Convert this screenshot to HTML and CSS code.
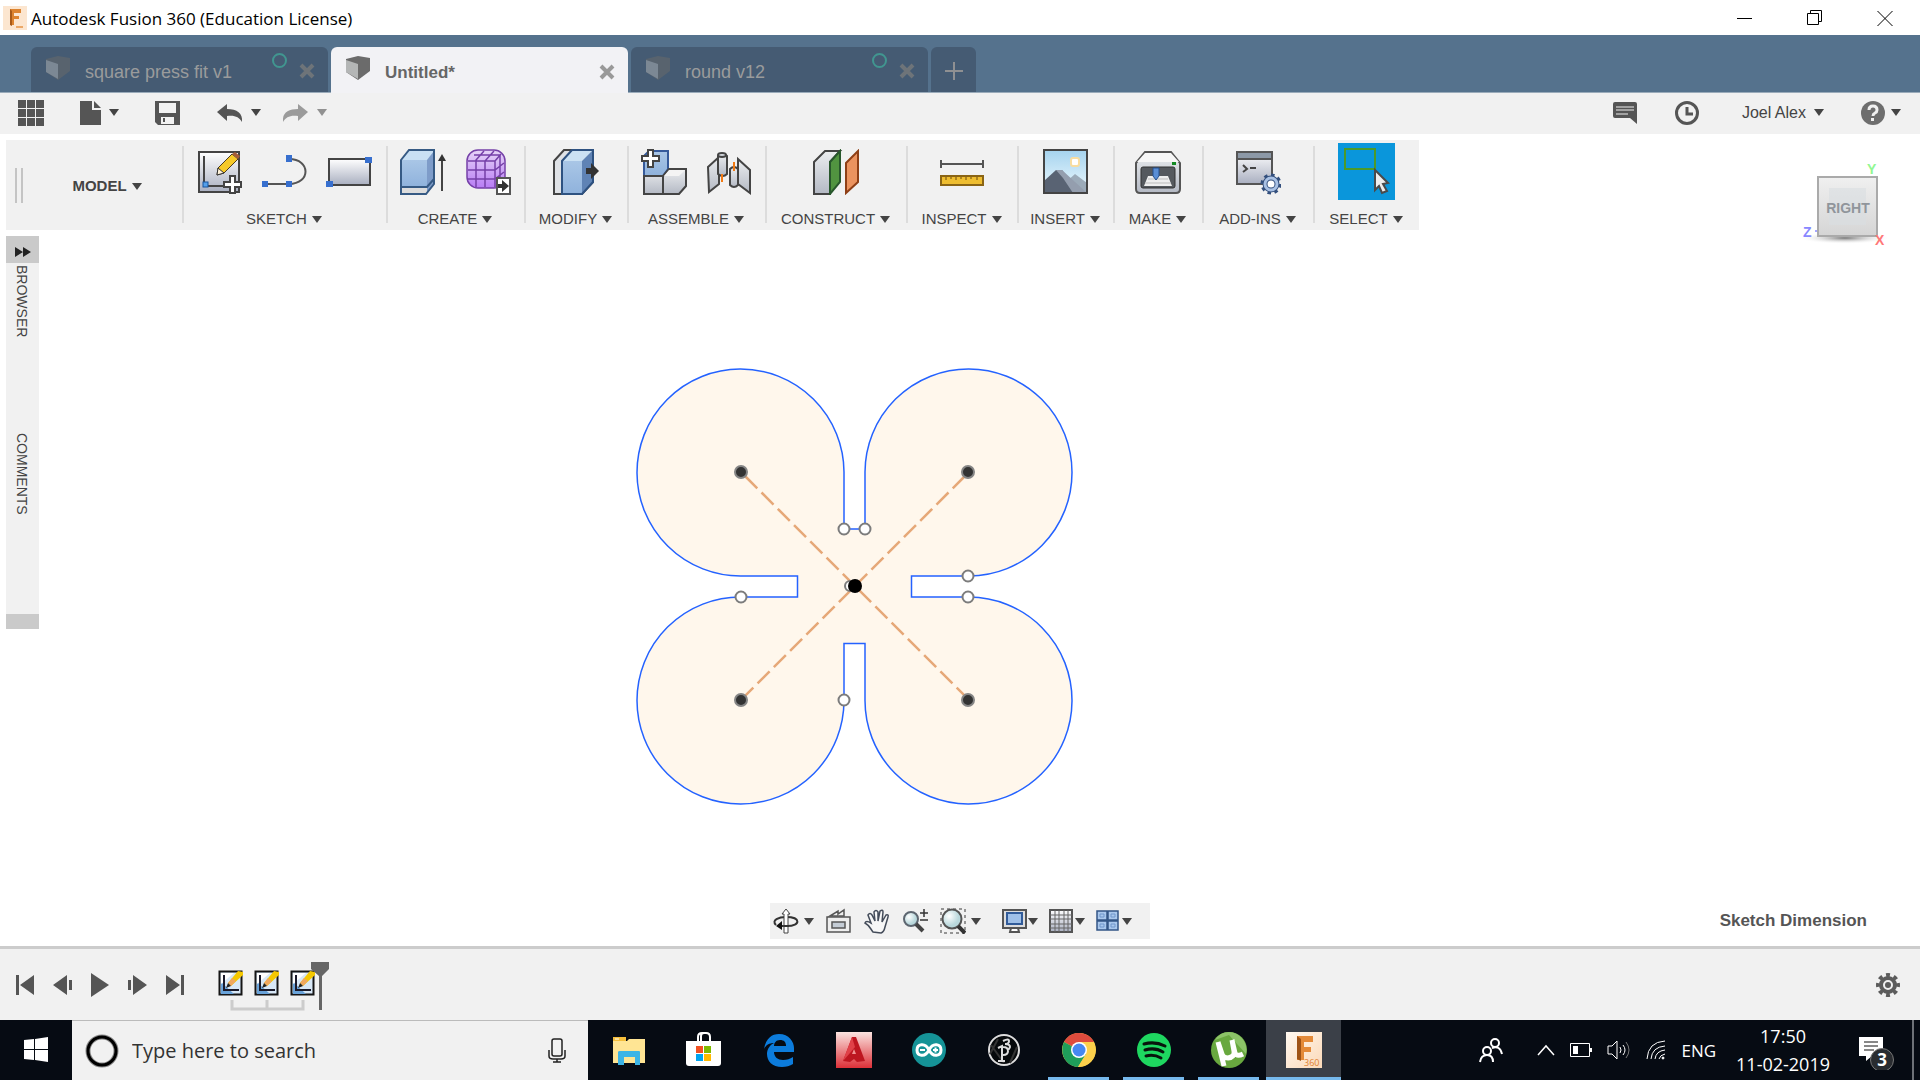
FILE: index.html
```html
<!DOCTYPE html>
<html lang="en">
<head>
<meta charset="utf-8">
<title>Autodesk Fusion 360 (Education License)</title>
<link rel="stylesheet" href="styles.css">
</head>
<body>
<svg class="defs" aria-hidden="true">
  <defs>
    <linearGradient id="steel" x1="0" y1="0" x2="0" y2="1"><stop offset="0" stop-color="#fff"/><stop offset="1" stop-color="#a9afc0"/></linearGradient>
    <linearGradient id="metal" x1="0" y1="0" x2="0" y2="1"><stop offset="0" stop-color="#eceef0"/><stop offset="1" stop-color="#b4b9c4"/></linearGradient>
    <linearGradient id="blue" x1="0" y1="0" x2="0" y2="1"><stop offset="0" stop-color="#a9c6e6"/><stop offset="1" stop-color="#8fb2dc"/></linearGradient>
    <linearGradient id="sky" x1="0" y1="0" x2="0" y2="1"><stop offset="0" stop-color="#a5d3ee"/><stop offset="1" stop-color="#eefaff"/></linearGradient>
    <linearGradient id="violet" x1="0" y1="0" x2="0" y2="1"><stop offset="0" stop-color="#e6d4f7"/><stop offset="1" stop-color="#b87cf5"/></linearGradient>
    <linearGradient id="red" x1="0" y1="0" x2="0" y2="1"><stop offset="0" stop-color="#fbe4e0"/><stop offset="1" stop-color="#dc3038"/></linearGradient>
    <linearGradient id="peach" x1="0" y1="0" x2="1" y2="1"><stop offset="0" stop-color="#fff8f0"/><stop offset="1" stop-color="#fbd9b8"/></linearGradient>
    <linearGradient id="face" x1="0" y1="0" x2="0" y2="1"><stop offset="0" stop-color="#f0f0f0"/><stop offset="1" stop-color="#d5d5d5"/></linearGradient>
    <radialGradient id="shade"><stop offset="0" stop-color="#777"/><stop offset="1" stop-color="#fff" stop-opacity="0"/></radialGradient>
    <radialGradient id="glass" cx=".35" cy=".35"><stop offset="0" stop-color="#fff"/><stop offset="1" stop-color="#b9d8dc"/></radialGradient>
    <symbol id="cube" viewBox="0 0 24 24"><path d="M0 3 12 0 24 2V15L12 24 0 16Z" fill="#6b6b6b"/><path d="M0 4 12 8V23L0 16Z" fill="#b4b6b6"/></symbol>
    <symbol id="feature" viewBox="0 0 26 26">
      <rect x="1.500" y="1.500" width="22" height="23" fill="#d8e8f7" stroke="#151515" stroke-width="2"/>
      <path d="M3 12 16 24H3Z" fill="#69a3da"/><path d="M3 3h13L3 14Z" fill="#fff"/>
      <path d="M6 5V20H21" fill="none" stroke="#1a1a2a" stroke-width="2"/>
      <path d="m10 13 10-12 5 1v3L13 16Z" fill="#f5c800"/><path d="m10 13 4-5 4 3-5 5Z" fill="#f0a860"/><path d="m8 18 2-5 3 3Z" fill="#222"/>
    </symbol>
  </defs>
</svg>

<header class="titlebar">
  <svg class="app-icon" width="24" height="24" viewBox="0 0 24 24"><rect width="24" height="24" fill="#fce6d0"/><path d="M7 3h11v4h-7v3h5v3h-5v6H7Z" fill="#dd8430"/><path d="M7 3v16l2 1V5Z" fill="#a85a18"/><path d="M13 21h7" stroke="#eba868" stroke-width="2"/></svg>
  <h1 class="title">Autodesk Fusion 360 (Education License)</h1>
  <div class="window-buttons">
    <button aria-label="Minimize"><svg width="16" height="16"><path d="M0 8.500H15" stroke="#000"/></svg></button>
    <button aria-label="Restore"><svg width="16" height="16" fill="none" stroke="#000"><path d="M.5 3.500h11v11H.5ZM3.500 3V.500h11v11H12"/></svg></button>
    <button aria-label="Close"><svg width="16" height="16"><path d="m.5 1 15 15M15.500 1l-15 15" stroke="#000"/></svg></button>
  </div>
</header>

<nav class="tabs" aria-label="Documents">
  <div class="tab"><svg class="tab-cube" width="24" height="24"><use href="#cube"/></svg><span class="tab-name">square press fit v1</span><i class="ring"></i><button class="tab-close" aria-label="Close tab"><svg width="16" height="16"><path d="m2 2 12 12M14 2 2 14" stroke="currentColor" stroke-width="4"/></svg></button></div>
  <div class="tab tab-active"><svg class="tab-cube" width="24" height="24"><use href="#cube"/></svg><span class="tab-name">Untitled*</span><button class="tab-close" aria-label="Close tab"><svg width="16" height="16"><path d="m2 2 12 12M14 2 2 14" stroke="currentColor" stroke-width="4"/></svg></button></div>
  <div class="tab"><svg class="tab-cube" width="24" height="24"><use href="#cube"/></svg><span class="tab-name">round v12</span><i class="ring"></i><button class="tab-close" aria-label="Close tab"><svg width="16" height="16"><path d="m2 2 12 12M14 2 2 14" stroke="currentColor" stroke-width="4"/></svg></button></div>
  <button class="tab-add" aria-label="New tab"><svg width="18" height="18"><path d="M9 0V18M0 9H18" stroke="#8f9092" stroke-width="2"/></svg></button>
</nav>

<div class="quickbar">
  <div class="quick-left">
    <button aria-label="Data panel"><svg width="26" height="26" fill="#555"><path d="M0 0h8v8H0ZM9 0h8v8H9ZM18 0h8v8h-8ZM0 9h8v8H0ZM9 9h8v8H9ZM18 9h8v8h-8ZM0 18h8v8H0ZM9 18h8v8H9ZM18 18h8v8h-8Z"/></svg></button>
    <button class="with-caret" aria-label="File"><svg width="21" height="26" fill="#555"><path d="M0 1h12v9h9v15H0Z"/><path d="M14 1l7 7h-7Z"/></svg><i class="caret"></i></button>
    <button aria-label="Save"><svg width="26" height="26"><path d="M0 1h25v24H3l-3-3Z" fill="#555"/><path d="M4 3h17v10H4ZM6 17h13v7H6Z" fill="#f2f2f2"/><path d="M8 18h2v4H8Z" fill="#555"/></svg></button>
    <div class="history">
      <button class="with-caret" aria-label="Undo"><svg width="26" height="18"><path d="M0 8 10 0v5C20 5 26 9 25 18 22 13 18 11 10 12v5Z" fill="#555"/></svg><i class="caret"></i></button>
      <button class="with-caret faded" aria-label="Redo"><svg width="26" height="18"><path d="M25 8 15 0v5C5 5-1 9 0 18 3 13 7 11 15 12v5Z" fill="#555"/></svg><i class="caret"></i></button>
    </div>
  </div>
  <div class="quick-right">
    <button aria-label="Comments"><svg width="26" height="26"><path d="M3 2h20q2 0 2 2v20l-7-6H3q-2 0-2-2V4q0-2 2-2Z" fill="#555"/><path d="M4 7h18M4 10h18M4 14h12" stroke="#f0f0f0" stroke-width="1"/></svg></button>
    <button aria-label="Job status"><svg width="26" height="26" fill="none" stroke="#555" stroke-width="3"><circle cx="13" cy="13" r="10.500"/><path d="M13 7v7h6"/></svg></button>
    <button class="with-caret user">Joel Alex<i class="caret"></i></button>
    <button class="with-caret help" aria-label="Help"><svg width="26" height="26"><circle cx="13" cy="13" r="12" fill="#6e6e6e"/><path d="M9 10q0-4 4-4t4 4q0 2-2 3-2 1-2 3" fill="none" stroke="#f0f0f0" stroke-width="3"/><rect x="11" y="18" width="3" height="3" fill="#f0f0f0"/></svg><i class="caret"></i></button>
  </div>
</div>

<main class="canvas">
  <div class="ribbon">
    <div class="workspace"><i class="grip"></i><button class="label model">MODEL<i class="caret"></i></button></div>

    <section class="group"><div class="tools">
      <button aria-label="Create sketch"><svg width="46" height="46"><rect x="3" y="3" width="40" height="40" fill="url(#steel)" stroke="#444" stroke-width="2"/><path d="M8 7V37H29" fill="none" stroke="#444" stroke-width="2"/><rect x="7" y="33" width="5" height="5" fill="#54a0ea" stroke="#1755a0"/><path d="m22 19 14-14 6 5L28 24l-7 2Z" fill="#f6c928" stroke="#4a3a20"/><path d="m36 5 3-2 5 4-2 3Z" fill="#a55c38"/><path d="m21 26 1-7 6 5Z" fill="#fff2d8" stroke="#333"/><path d="M34 27h5v6h6v5h-6v6h-5v-6h-6v-5h6Z" fill="#fff" stroke="#444" stroke-width="2"/></svg></button>
      <button aria-label="Line"><svg width="46" height="46"><path d="M4 35H28C50 35 50 10 28 10" fill="none" stroke="#555" stroke-width="2"/><path d="M1 32h6v6H1ZM25 32h6v6h-6ZM25 6h6v7h-6Z" fill="#376fce"/></svg></button>
      <button aria-label="Rectangle"><svg width="46" height="46"><rect x="3" y="10" width="41" height="26" fill="url(#steel)" stroke="#444" stroke-width="2"/><path d="M0 32h7v6H0ZM39 8h7v6h-7Z" fill="#376fce"/></svg></button>
    </div><button class="label">SKETCH<i class="caret"></i></button></section>

    <section class="group"><div class="tools">
      <button aria-label="Extrude"><svg width="46" height="46"><path d="m1 11 8-10h25v34l-8 10H1Z" fill="#c9e0f4"/><path d="m27 11 7-9v34l-7 8Z" fill="#7e9cc9"/><rect x="1" y="11" width="26" height="27" fill="url(#blue)"/><path d="M1 38h26v7H1Z" fill="#ddd"/><path d="m1 11 8-10h25v34l-8 10H1ZM1 38h26l7-8" fill="none" stroke="#365a84" stroke-width="2"/><path d="M42 42V10" stroke="#444" stroke-width="2"/><path d="m38 12 4-7 4 7Z" fill="#333"/></svg></button>
      <button aria-label="Create form"><svg width="46" height="46"><rect x="2" y="1" width="38" height="38" rx="11" fill="url(#violet)"/><g fill="none" stroke="#7540a8" stroke-width="1.500"><rect x="2" y="1" width="38" height="38" rx="11"/><path d="M3 12h27v26M3 21h27l9-7M3 30h27l9-7M11 38V11l8-9M20 38V12l9-10M30 12l6-7M9 6h27M35 33V7"/></g><path d="M32 29h13v16H32Z" fill="#fff" stroke="#555" stroke-width="2"/><path d="M33 35h4v-4l7 6-7 6v-4h-4Z" fill="#333"/></svg></button>
    </div><button class="label">CREATE<i class="caret"></i></button></section>

    <section class="group"><div class="tools">
      <button aria-label="Press pull"><svg width="46" height="46"><path d="M1 12 11 1H40V33L29 45H1Z" fill="#dfe2e6" stroke="#444" stroke-width="2"/><path d="M9 12 19 1H40L29 12Z" fill="#cbe1f3"/><path d="M29 12 40 1V33L29 45Z" fill="#5f83b5"/><rect x="9" y="12" width="20" height="33" fill="url(#blue)"/><path d="M9 45V12L19 1H40V33L29 45Z" fill="none" stroke="#2e5281" stroke-width="2"/><path d="M33 19h5v-5l8 8-8 8v-5h-5Z" fill="#333"/></svg></button>
    </div><button class="label">MODIFY<i class="caret"></i></button></section>

    <section class="group"><div class="tools">
      <button aria-label="New component"><svg width="46" height="46"><path d="M3 7 8 2H27V20L22 27H3Z" fill="url(#blue)" stroke="#365a9a" stroke-width="2"/><path d="M3 27H22V45H3ZM22 27l6-7H45V37l-7 8H22Z" fill="url(#metal)" stroke="#444" stroke-width="2"/><path d="M23 27H38L44 21H28Z" fill="#f4f4f4"/><path d="M7 1h5v6h6v5h-6v6H7v-6H1V7h6Z" fill="#fff" stroke="#444" stroke-width="2"/></svg></button>
      <button aria-label="Joint"><svg width="46" height="46" fill="url(#metal)" stroke="#444" stroke-width="2"><path d="m2 18 11-10v27L3 43Z"/><path d="M12 7q5-4 9 0v18q-4 4-9 0Z"/><ellipse cx="16" cy="6" rx="4" ry="2"/><path d="m32 10 12 11v23L32 35Z"/><path d="M24 20q4-4 8 0v16q-4 4-8 0Z"/><path d="M16 25v8M28 13v9" stroke="#f37a13"/></svg></button>
    </div><button class="label">ASSEMBLE<i class="caret"></i></button></section>

    <section class="group"><div class="tools">
      <button aria-label="Offset plane"><svg width="46" height="46" stroke-width="2"><path d="M1 13 12 2H27L17 13V45H1Z" fill="url(#metal)" stroke="#444"/><path d="M17 13 27 2V33L17 45Z" fill="#519440" stroke="#28572c"/><path d="M33 14 45 2V33L33 44Z" fill="#eb935f" stroke="#8e3f16"/></svg></button>
    </div><button class="label">CONSTRUCT<i class="caret"></i></button></section>

    <section class="group"><div class="tools">
      <button aria-label="Measure"><svg width="46" height="46"><path d="M2 15H44M2 11v8M44 11v8" stroke="#555" stroke-width="2"/><rect x="2" y="27" width="42" height="9" fill="#eebd30" stroke="#8a6414" stroke-width="2"/><path d="M7 28v3M12 28v2M17 28v3M22 28v2M27 28v3M32 28v2M38 28v3" stroke="#6c4b08"/></svg></button>
    </div><button class="label">INSPECT<i class="caret"></i></button></section>

    <section class="group"><div class="tools">
      <button aria-label="Insert image"><svg width="46" height="46"><rect x="2" y="1" width="43" height="43" fill="url(#sky)"/><path d="M16 40 33 25 45 34V44H16Z" fill="#9cabb9"/><path d="M2 32 14 21h6l18 23H2Z" fill="#596373"/><path d="M14 21h6l25 23H31L21 29Z" fill="#949eae"/><rect x="29" y="9" width="8" height="8" rx="2" fill="#fff" stroke="#f8dda0" stroke-width="2"/><rect x="2" y="1" width="43" height="43" fill="none" stroke="#444" stroke-width="2"/></svg></button>
    </div><button class="label">INSERT<i class="caret"></i></button></section>

    <section class="group"><div class="tools">
      <button aria-label="3D print"><svg width="46" height="46"><path d="M1 14 10 3H36l9 11V40q0 4-4 4H5q-4 0-4-4Z" fill="url(#metal)" stroke="#555" stroke-width="2"/><path d="M2 13 10 4H36l8 9Z" fill="#f7f7f7"/><rect x="6" y="18" width="34" height="21" rx="2" fill="#55595e" stroke="#333"/><path d="m13 27-4 10h28l-4-10Z" fill="#eee"/><path d="M10 34h26M13 30h20" stroke="#bbb"/><path d="M18 19h6v8l-3 4-3-4Z" fill="#5a8ed5" stroke="#24508f"/><rect x="37" y="13" width="4" height="3" fill="#138a22"/></svg></button>
    </div><button class="label">MAKE<i class="caret"></i></button></section>

    <section class="group"><div class="tools">
      <button aria-label="Scripts and add-ins"><svg width="46" height="46"><rect x="2" y="3" width="35" height="32" fill="url(#steel)" stroke="#555" stroke-width="2"/><path d="M3 4h33v6H3Z" fill="#8c98a6"/><path d="M2 10H37" stroke="#555" stroke-width="2"/><path d="m8 16 4 4-4 3M15 19h6" fill="none" stroke="#444" stroke-width="2"/><circle cx="36" cy="35" r="9" fill="none" stroke="#34507e" stroke-width="3" stroke-dasharray="1 1" pathLength="16"/><circle cx="36" cy="35" r="6" fill="#fff" stroke="#34507e" stroke-width="5"/><circle cx="36" cy="35" r="6" fill="none" stroke="#a9c1e4" stroke-width="3"/></svg></button>
    </div><button class="label">ADD-INS<i class="caret"></i></button></section>

    <section class="group"><div class="tools">
      <button class="selected" aria-label="Select"><svg width="57" height="57"><rect x="7" y="6" width="30" height="20" fill="none" stroke="#4c9a2a" stroke-width="2"/><path d="M37 27 50 40l-5 1 4 7-5 2-3-7-4 4Z" fill="#eee" stroke="#4a4a4a" stroke-width="2"/></svg></button>
    </div><button class="label">SELECT<i class="caret"></i></button></section>
  </div>

  <aside class="sidebar">
    <button class="expand" aria-label="Expand"><svg width="16" height="10" fill="#222"><path d="m0 0 8 5-8 5ZM8 0l8 5-8 5Z"/></svg></button>
    <button class="side-tab">BROWSER</button>
    <button class="side-tab">COMMENTS</button>
    <i class="side-foot"></i>
  </aside>

  <svg class="viewcube" width="105" height="100" viewBox="1795 155 105 100">
    <ellipse cx="1845" cy="238" rx="46" ry="6" fill="url(#shade)"/>
    <rect x="1818" y="177" width="59" height="59" fill="url(#face)" stroke="#aaa" stroke-width="2"/>
    <rect x="1829" y="188" width="37" height="37" fill="#d8dde1" opacity=".6"/>
    <text class="cube-face" x="1848" y="213" text-anchor="middle">RIGHT</text>
    <text class="axis" x="1867" y="174" fill="#92f792">Y</text><text class="axis" x="1803" y="237" fill="#8888ff">Z</text><text class="axis" x="1875" y="245" fill="#ff7777">X</text>
    <circle cx="1816" cy="231" r="1" fill="#88f"/>
  </svg>

  <svg class="sketch" width="450" height="452" viewBox="630 360 450 452">
    <path d="M844 529V472A103.500 103.500 0 1 0 741 576H797.500V597H741A103.500 103.500 0 1 0 844 700V643.500H865V700A103.500 103.500 0 1 0 969 597H911.500V576H969A103.500 103.500 0 1 0 865 472V529Z" fill="#fff7ec" stroke="#2462ff" stroke-width="1.500"/>
    <path d="M741 472 969 700M969 472 741 700" stroke="#e6a878" stroke-width="2.500" stroke-dasharray="17 6" stroke-dashoffset="-6"/>
    <g fill="#fff" stroke="#7c7c7c" stroke-width="2"><circle cx="844" cy="529" r="5.500"/><circle cx="865" cy="529" r="5.500"/><circle cx="741" cy="597" r="5.500"/><circle cx="968" cy="576" r="5.500"/><circle cx="968" cy="597" r="5.500"/><circle cx="844" cy="700" r="5.500"/><circle cx="850" cy="586" r="5"/></g>
    <g fill="#333" stroke="#858585" stroke-width="2"><circle cx="741" cy="472" r="6"/><circle cx="968" cy="472" r="6"/><circle cx="741" cy="700" r="6"/><circle cx="968" cy="700" r="6"/></g>
    <circle cx="855" cy="586" r="7" fill="#000"/>
  </svg>

  <div class="navbar">
    <div class="nav-group">
      <button class="with-caret" aria-label="Orbit"><svg width="26" height="26"><path d="M3 17C-2 12 6 9 13 9c15 0 15 9 1 9H7" fill="none" stroke="#333" stroke-width="2"/><path d="m13 1 4 5h-2v19h-4V6H9Z" fill="#fff" stroke="#444"/><path d="M11 18h5" stroke="#333" stroke-width="2"/><path d="m3 18 6-5v9Z" fill="#111"/></svg><i class="caret"></i></button>
      <button aria-label="Look at"><svg width="26" height="26" fill="#eee" stroke="#555" stroke-width="1.500"><path d="m4 8 8-5v3l6-4v6Z"/><path d="M1 9h23v15H1Z"/><path d="M6 14h13v6H6Z" fill="#c4ccd5"/></svg></button>
      <button aria-label="Pan"><svg width="26" height="26"><path d="M9 24C6 20 5 17 1 15q1-3 6 0L4 7q2-3 4 0l3 6-1-9q2-3 4 0v9l2-10q3-2 3 1l-1 10 4-7q3-1 2 2l-3 10q-1 5-4 6Z" fill="#f7f7f7" stroke="#444c5a" stroke-width="1.500"/></svg></button>
      <button aria-label="Zoom"><svg width="26" height="26"><circle cx="9" cy="11" r="7" fill="url(#glass)" stroke="#5d6670" stroke-width="2"/><path d="m14 16 7 7" stroke="#444" stroke-width="4"/><path d="M22 1v8M18 5h8M18 12h8" stroke="#333" stroke-width="1.500"/></svg></button>
      <button class="with-caret" aria-label="Fit"><svg width="26" height="26"><path d="M1 1h24v24H1Z" fill="none" stroke="#777" stroke-width="1.500" stroke-dasharray="3 3"/><circle cx="12" cy="11" r="9.500" fill="url(#glass)" stroke="#555" stroke-width="2"/><path d="m18 18 7 7" stroke="#333" stroke-width="4"/></svg><i class="caret"></i></button>
    </div>
    <div class="nav-group nav-display">
      <button class="with-caret" aria-label="Display settings"><svg width="26" height="26"><path d="M2 2h23v18H2Z" fill="#ddd" stroke="#555" stroke-width="2"/><path d="M6 5h15v11H6Z" fill="#9fc0e8" stroke="#315b99" stroke-width="2"/><path d="M10 20h7l1 4H9Z" fill="#fff" stroke="#555" stroke-width="2"/></svg><i class="caret"></i></button>
      <button class="with-caret" aria-label="Grid and snaps"><svg width="26" height="26"><path d="M2 2h22v22H2Z" fill="url(#steel)" stroke="#555" stroke-width="2"/><path d="M7 2v22M11 2v22M16 2v22M20 2v22M2 7h22M2 11h22M2 16h22M2 20h22" stroke="#666"/></svg><i class="caret"></i></button>
      <button class="with-caret" aria-label="Viewports"><svg width="26" height="26" fill="#a9c7ec" stroke="#335686" stroke-width="1.500"><path d="M2 3h10v9H2ZM13 3h10v9H13ZM2 13h10v9H2ZM13 13h10v9H13Z"/><path d="M5 6h4v3H5ZM16 6h4v3h-4ZM5 16h4v3H5ZM16 16h4v3h-4Z" stroke="#7197cc" stroke-width="1"/></svg><i class="caret"></i></button>
    </div>
  </div>
  <p class="hint">Sketch Dimension</p>
</main>

<footer class="timeline">
  <div class="playback">
    <button aria-label="Go to start"><svg width="20" height="24" fill="#555"><path d="M0 2h3v20H0ZM18 2v20L4 12Z"/></svg></button>
    <button aria-label="Step back"><svg width="20" height="24" fill="#555"><path d="M14 2v20L0 12ZM16 7h3v10h-3Z"/></svg></button>
    <button aria-label="Play"><svg width="20" height="24" fill="#555"><path d="m1 0 18 12L1 24Z"/></svg></button>
    <button aria-label="Step forward"><svg width="20" height="24" fill="#555"><path d="m6 2 14 10L6 22ZM1 7h3v10H1Z"/></svg></button>
    <button aria-label="Go to end"><svg width="20" height="24" fill="#555"><path d="m2 2 14 10L2 22ZM17 2h3v20h-3Z"/></svg></button>
  </div>
  <div class="features">
    <button aria-label="Sketch 1"><svg width="26" height="26"><use href="#feature"/></svg></button>
    <button aria-label="Sketch 2"><svg width="26" height="26"><use href="#feature"/></svg></button>
    <button aria-label="Sketch 3"><svg width="26" height="26"><use href="#feature"/></svg></button>
    <svg class="marker" width="114" height="50"><path d="M14 38v9H85V38M49 38v9" fill="none" stroke="#ccc" stroke-width="3"/><path d="M93 0h18v7l-7 7v34h-3V14l-8-7Z" fill="#666"/></svg>
  </div>
  <button class="settings" aria-label="Timeline settings"><svg width="24" height="24" fill="none" stroke="#5c5c5c"><circle cx="12" cy="12" r="7" stroke-width="4"/><circle cx="12" cy="12" r="10" stroke-width="4" stroke-dasharray="1 1" stroke-dashoffset=".5" pathLength="16"/><circle cx="12" cy="12" r="3" fill="#5c5c5c" stroke="none"/></svg></button>
</footer>

<div class="taskbar">
  <button class="start" aria-label="Start"><svg width="24" height="26" fill="#fff"><path d="m0 3 10-1v10H0ZM11 2l13-2v12H11ZM0 13h10v10L0 22ZM11 13h13v12l-13-2Z"/></svg></button>
  <label class="search">
    <svg width="34" height="34"><circle cx="17" cy="17" r="14" fill="none" stroke="#888" stroke-width="5"/><circle cx="17" cy="17" r="14" fill="none" stroke="#000" stroke-width="3"/></svg>
    <input type="text" placeholder="Type here to search" aria-label="Search">
    <svg width="18" height="26" fill="none" stroke="#222" stroke-width="1.500"><rect x="4" y="1" width="10" height="17" rx="2"/><path d="M1 12v6q0 3 4 3h8q4 0 4-3v-6M9 21v3M5 24h8"/></svg>
  </label>
  <nav class="apps" aria-label="Apps">
    <button class="app" aria-label="File Explorer"><svg width="36" height="36"><path d="M2 5h13v6H2Z" fill="#f5bf3c"/><path d="M2 9 16 9l2-2h16v24H2Z" fill="#ffe594"/><path d="M7 20q0-1 2-1h19q1 0 1 1v13h-5v-8H13v8H7Z" fill="#3db5e6"/><path d="M4 7h4" stroke="#fff"/></svg></button>
    <button class="app" aria-label="Store"><svg width="36" height="36"><path d="M12 10V5q0-4 4-4h4q4 0 4 4v5M15 10V4q0-3 3-3" fill="none" stroke="#fff" stroke-width="2"/><path d="M0 9h35v22q0 3-3 3H3q-3 0-3-3Z" fill="#fff"/><path d="M10 14h7v7h-7Z" fill="#f25022"/><path d="M18 14h7v7h-7Z" fill="#7fba00"/><path d="M10 22h7v7h-7Z" fill="#00a4ef"/><path d="M18 22h7v7h-7Z" fill="#ffb900"/></svg></button>
    <button class="app" aria-label="Edge"><svg width="36" height="36"><path d="M3 17C5 6 11 2 18 2c10 0 15 8 15 14v4H13c0 5 4 8 9 8 4 0 7-1 10-3v7c-3 2-7 3-11 3C11 35 6 29 6 22c0-5 3-9 7-11-5 0-8 2-10 6Zm10-3h12c0-4-2-6-6-6s-6 3-6 6Z" fill="#0c7cdc"/></svg></button>
    <button class="app" aria-label="AutoCAD"><svg width="36" height="36"><rect width="36" height="36" fill="url(#red)"/><path d="M16 5h4l9 24-8 1-3-3-4 3-7-1Z" fill="#bd1620"/><path d="m16 5-9 24 7-8 5-6Z" fill="#e04148"/><path d="m18 17 2 5h-4Z" fill="#f09090"/></svg></button>
    <button class="app" aria-label="Arduino"><svg width="36" height="36"><circle cx="18" cy="18" r="17" fill="#159397"/><path d="M18 18c-4-8-12-6-12 0s8 8 12 0 12-6 12 0-8 8-12 0Z" fill="none" stroke="#fff" stroke-width="3"/><path d="M9 18h5M22 18h5M24.500 15.500v5" stroke="#fff" stroke-width="2"/></svg></button>
    <button class="app" aria-label="Processing"><svg width="36" height="36" fill="none" stroke="#ddd" stroke-width="2"><circle cx="18" cy="18" r="15" fill="#06090b"/><path d="m5 13 13 18M12 7l-8 15M24 31 31 15" stroke="#333"/><path d="M12 29h7M16 29V14l-4 2M17 15q5 0 5 4t-5 4M17 9q6-3 6 0t-4 3q5 0 5 3-1 3-3 3" stroke-width="2"/></svg></button>
    <button class="app app-open" aria-label="Chrome"><svg width="36" height="36"><circle cx="18" cy="18" r="17" fill="#fcd04b"/><path d="M18 18 3 10C7 3 12 1 18 1s12 3 15 9H18Z" fill="#dd4b3d"/><path d="M3 10q-3 6-1 13c2 7 8 12 15 12l8-13-7-4Z" fill="#1f9e5a"/><path d="M18 10H33q5 14-6 22-5 3-10 3l8-13Z" fill="#fcd04b"/><circle cx="18" cy="18" r="8" fill="#fff"/><circle cx="18" cy="18" r="6.500" fill="#4688f1"/></svg></button>
    <button class="app app-open" aria-label="Spotify"><svg width="36" height="36"><circle cx="18" cy="18" r="17" fill="#1ed760"/><path d="M8 12q11-3 21 2M9 18q10-3 18 2M10 24q8-2 15 2" fill="none" stroke="#08150c" stroke-width="3" stroke-linecap="round"/></svg></button>
    <button class="app app-open" aria-label="uTorrent"><svg width="36" height="36"><circle cx="18" cy="18" r="18" fill="#68a83f"/><path d="M18 0a18 18 0 0 1 17 22L18 3 4 8Q9 0 18 0Z" fill="#8cc368"/><path d="m7 10 6 24M7 10l4 12q1 4 6 4 7-1 6-7L21 8l3 13q2 4 8 1" fill="none" stroke="#fff" stroke-width="5"/></svg></button>
    <button class="app app-open app-current" aria-label="Fusion 360"><svg width="36" height="36"><rect width="36" height="36" fill="url(#peach)"/><path d="M11 4h16v6H18v5h7v5h-7v8h-7Z" fill="#e48a38"/><path d="m11 4 4 3v22l-4-2Z" fill="#9f5316"/><text class="badge-360" x="18" y="34">360</text></svg></button>
  </nav>
  <div class="tray">
    <button class="people" aria-label="People"><svg width="24" height="26" fill="none" stroke="#fff" stroke-width="2"><circle cx="16" cy="6" r="4"/><circle cx="8" cy="14" r="4"/><path d="M1 25q1-7 7-7t6 7M13 11q8-3 10 6"/></svg></button>
    <button aria-label="Hidden icons"><svg width="18" height="12"><path d="m1 11 8-9 8 9" fill="none" stroke="#fff" stroke-width="1.500"/></svg></button>
    <button aria-label="Battery"><svg width="22" height="14"><path d="M.5.500h19v13H.5Z" fill="none" stroke="#fff"/><path d="M3 3h5v8H3ZM20 5h2v4h-2Z" fill="#fff"/></svg></button>
    <button aria-label="Volume"><svg width="24" height="20" fill="none" stroke="#fff"><path d="M1 6h4l5-5v18l-5-5H1Z"/><path d="M13 7q2 3 0 6M16 5q4 5 0 10"/><path d="M19 2q6 8 0 16" stroke="#777"/></svg></button>
    <button aria-label="Network"><svg width="20" height="20" fill="none" stroke="#fff"><path d="M1 19Q2 2 19 1M5 19Q6 7 19 6M9 19q1-8 10-9M13 19q1-4 6-5"/><circle cx="17" cy="18" r="1" fill="#fff"/></svg></button>
    <button>ENG</button>
    <button class="clock"><span>17:50</span><span>11-02-2019</span></button>
    <button aria-label="Notifications"><svg width="38" height="40"><path d="M0 7h24v19H13l-6 5v-5H0Z" fill="#fff"/><path d="M5 12h14M5 16h14M5 20h10" stroke="#111" stroke-width="1"/><circle cx="23" cy="30" r="11.500" fill="#292c30" stroke="#777"/><text class="count" x="23" y="36" text-anchor="middle">3</text></svg></button>
    <i class="peek"></i>
  </div>
</div>
</body>
</html>
```
FILE: styles.css
```css
* { box-sizing: border-box; }
body {
  margin: 0;
  min-height: 100vh;
  display: flex;
  flex-direction: column;
  background: #fff;
  color: #444;
  font-family: "Liberation Sans", Arial, sans-serif;
  font-size: 15px;
}
button {
  margin: 0;
  padding: 0;
  border: 0;
  background: none;
  color: inherit;
  font: inherit;
  display: flex;
  align-items: center;
  justify-content: center;
  white-space: nowrap;
}
svg { display: block; flex: none; }
.defs { position: absolute; width: 0; height: 0; }
.caret {
  flex: none;
  border: 5px solid transparent;
  border-top: 7px solid #444;
  border-bottom: 0;
}
.with-caret { gap: 8px; }

.titlebar {
  height: 35px;
  display: flex;
  align-items: center;
  gap: 4px;
  padding-left: 3px;
}
.title {
  margin: 0;
  padding-top: 2px;
  font: 17px/24px "Open Sans", "Noto Sans", sans-serif;
  color: #000;
}
.window-buttons { margin-left: auto; display: flex; height: 100%; }
.window-buttons button { width: 70px; }

.tabs {
  height: 58px;
  display: flex;
  align-items: flex-end;
  gap: 3px;
  padding-left: 31px;
  background: #55728d;
  border-bottom: 1px solid #9aabba;
}
.tab, .tab-add {
  height: 45px;
  border-radius: 6px 6px 0 0;
  background: #455b73;
}
.tab {
  width: 297px;
  display: flex;
  align-items: center;
  gap: 12px;
  padding: 0 13px 0 15px;
  color: #9a9b9c;
  font-size: 18px;
}
.tab-cube { margin: -4px 3px 0 0; opacity: .5; }
.tab-name { flex: 1; padding-top: 6px; }
.tab-close { color: #6e7479; padding-top: 3px; }
.tab-active {
  height: 46px;
  margin-bottom: -1px;
  background: #f2f2f5;
  color: #666;
  font-size: 17px;
  font-weight: bold;
}
.tab-active .tab-cube { opacity: 1; }
.tab-active .tab-close { color: #999; }
.ring {
  width: 15px;
  height: 15px;
  margin-top: -18px;
  border: 2px solid #419690;
  border-radius: 50%;
}
.tab-add { width: 45px; padding-top: 2px; }

.quickbar {
  height: 41px;
  display: flex;
  align-items: center;
  justify-content: space-between;
  padding: 0 19px 2px 18px;
  background: #f1f1f1;
}
.quick-left, .quick-right { display: flex; align-items: center; gap: 36px; }
.history { display: flex; gap: 22px; }
.faded { opacity: .55; }
.user { padding-left: 6px; font-size: 16px; }
.help { gap: 5px; }

.canvas {
  position: relative;
  flex: 1;
  min-height: 780px;
  padding: 6px;
}
.ribbon {
  display: grid;
  grid-template-columns: 176px 204px 138px 103px 138px 141px 111px 96px 89px 111px 106px;
  width: max-content;
  height: 90px;
  background: #f1f1f1;
}
.workspace { display: flex; align-items: center; padding-left: 9px; }
.grip { width: 8px; height: 35px; border: solid #c4c4c4; border-width: 0 2px; }
.model { margin: 2px auto 0; padding-left: 9px; font-weight: bold; }
.group {
  display: flex;
  flex-direction: column;
  align-items: center;
  background: linear-gradient(#dcdcdc, #dcdcdc) 0 6px / 2px 77px no-repeat;
}
.tools { height: 63px; display: flex; align-items: center; gap: 19px; }
.label { gap: 5px; line-height: 22px; }
.group .label { margin-top: 5px; }
.selected { background: #0a96db; }

.sidebar {
  width: 33px;
  height: 393px;
  margin-top: 6px;
  display: flex;
  flex-direction: column;
  align-items: stretch;
  background: #f1f1f1;
}
.expand { height: 27px; padding-top: 4px; background: #cacaca; }
.side-tab {
  height: 168px;
  padding: 2px 2px 0 0;
  justify-content: flex-start;
  writing-mode: vertical-rl;
  font-size: 14px;
}
.side-foot { height: 15px; margin-top: auto; background: #cacaca; }

.viewcube { position: absolute; top: 21px; right: 20px; }
.cube-face { font-size: 14px; font-weight: bold; fill: #90959b; }
.axis { font-size: 14px; font-weight: bold; }
.sketch { position: absolute; top: 226px; left: calc(50% - 330px); }

.navbar {
  position: absolute;
  bottom: 7px;
  left: calc(50% - 190px);
  display: flex;
  gap: 20px;
  height: 36px;
  padding: 0 18px 0 3px;
  background: #f1f1f1;
}
.nav-group { display: flex; align-items: center; gap: 12px; }
.nav-group .with-caret { gap: 5px; }
.nav-display { gap: 10px; }
.nav-display .with-caret { gap: 1px; }
.hint {
  position: absolute;
  right: 53px;
  bottom: 15px;
  margin: 0;
  font-size: 17px;
  line-height: 20px;
  font-weight: bold;
  color: #555;
}

.timeline {
  height: 74px;
  display: flex;
  align-items: center;
  padding: 0 20px 0 16px;
  border-top: 3px solid #ccc;
  background: #f1f1f1;
}
.playback { display: flex; gap: 17px; }
.features { position: relative; display: flex; gap: 10px; margin: 0 0 3px 34px; }
.marker { position: absolute; left: 0; top: -8px; }
.settings { margin-left: auto; }

.taskbar {
  height: 60px;
  display: flex;
  background: #060b13;
  color: #fff;
  font-family: "Open Sans", "Noto Sans", sans-serif;
}
.start { width: 72px; }
.search {
  width: 516px;
  display: flex;
  align-items: center;
  gap: 13px;
  padding: 0 22px 0 13px;
  background: #f1f1f1;
  border-top: 1px solid #bbb;
}
.search input {
  flex: 1;
  min-width: 0;
  padding: 0;
  border: 0;
  background: none;
  font: 20px/28px "Open Sans", "Noto Sans", sans-serif;
  color: #222;
}
.search input::placeholder { color: #333; opacity: 1; }
.apps { display: flex; margin-left: 3px; }
.app { width: 75px; padding: 0 1px; }
.app-open { background: linear-gradient(#76b9ed, #76b9ed) center bottom / 61px 3px no-repeat; }
.app-current {
  background: linear-gradient(#76b9ed, #76b9ed) center bottom / 100% 3px no-repeat, #3b4048;
}
.badge-360 { font-size: 9px; fill: #e08030; }
.tray {
  display: flex;
  align-items: center;
  gap: 15px;
  margin-left: auto;
  padding-right: 6px;
  font-size: 17px;
}
.people { margin-right: 19px; }
.clock { flex-direction: column; padding: 0 14px 0 5px; font-size: 18px; line-height: 28px; }
.count { font-size: 17px; font-weight: bold; fill: #fff; }
.peek { width: 2px; height: 60px; background: #6d7177; }
```
